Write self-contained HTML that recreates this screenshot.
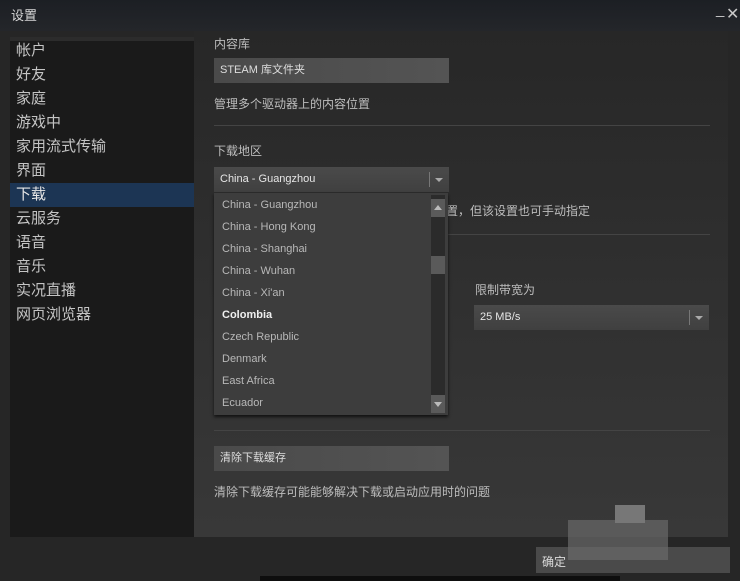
<!DOCTYPE html>
<html><head><meta charset="utf-8"><style>
*{margin:0;padding:0;box-sizing:border-box}
body{width:740px;height:581px;background:#262626;font-family:"Liberation Sans","Noto Sans CJK SC",sans-serif;position:relative;overflow:hidden;color:#c6c6c6}
.title{position:absolute;left:0;top:0;width:740px;height:31px;background:linear-gradient(#1c1f24,#24262a)}
.title span{position:absolute;left:11px;top:5px;font-size:13px;color:#d8d8d8}
.ctl{position:absolute;top:4px;font-size:15px;color:#c8c8c8}
.side{position:absolute;left:10px;top:37px;width:184px;height:500px;background:#1a1a1a}
.side .band{height:4px;background:#2c2c2c}
.side div.it{height:24px;line-height:24px;padding-left:6px;font-size:15px;color:#c4c4c4}
.side div.sel{background:#1c3554;color:#e6e6e6}
.main{position:absolute;left:194px;top:31px;width:534px;height:506px;background:linear-gradient(#272727,#383838)}
.t{position:absolute;font-size:12px;color:#bdbdbd;white-space:nowrap}
.btn{position:absolute;background:linear-gradient(90deg,#4a4a4a,#545454);font-size:11px;color:#dedede;padding-left:6px;line-height:25px}
.hr{position:absolute;height:1px;background:#444}
.dd{position:absolute;background:linear-gradient(#4a4a4a,#404040);font-size:11px;color:#e6e6e6;padding-left:6px;line-height:25px}
.dd .sep{position:absolute;right:19px;top:5px;width:1px;height:15px;background:#777}
.dd .ar{position:absolute;right:6px;top:11px;border-left:4px solid transparent;border-right:4px solid transparent;border-top:4px solid #aaa}
.list{position:absolute;left:214px;top:193px;width:234px;height:222px;background:#3d3d3d;box-shadow:0 2px 3px #111}
.list .li{height:22px;line-height:22px;padding-left:8px;font-size:11px;color:#b8b8b8}
.sb{position:absolute;left:217px;top:2px;width:14px;height:218px;background:#2b2b2b}
.sb .b{position:absolute;left:0;width:14px;height:18px;background:#5a5a5a}
</style></head><body>
<div class="title"><span>设置</span><div class="ctl" style="left:716px;top:1px">_</div><div class="ctl" style="left:726px;top:4px;font-size:16px">✕</div></div>
<div class="side"><div class="band"></div>
<div class="it" style="margin-top:-2px">帐户</div><div class="it">好友</div><div class="it">家庭</div><div class="it">游戏中</div><div class="it">家用流式传输</div><div class="it">界面</div><div class="it sel">下载</div><div class="it">云服务</div><div class="it">语音</div><div class="it">音乐</div><div class="it">实况直播</div><div class="it">网页浏览器</div>
</div>
<div class="main"></div>
<div class="t" style="left:214px;top:35px">内容库</div>
<div class="btn" style="left:214px;top:58px;width:235px">STEAM 库文件夹</div>
<div class="t" style="left:214px;top:95px">管理多个驱动器上的内容位置</div>
<div class="hr" style="left:214px;top:125px;width:496px"></div>
<div class="t" style="left:214px;top:142px">下载地区</div>
<div class="dd" style="left:214px;top:167px;width:235px;height:25px">China - Guangzhou<div class="sep"></div><div class="ar"></div></div>
<div class="t" style="left:446px;top:202px">置，但该设置也可手动指定</div>
<div class="hr" style="left:448px;top:234px;width:262px"></div>
<div class="t" style="left:475px;top:281px">限制带宽为</div>
<div class="dd" style="left:474px;top:305px;width:235px;height:25px">25 MB/s<div class="sep"></div><div class="ar"></div></div>
<div class="hr" style="left:214px;top:430px;width:496px"></div>
<div class="btn" style="left:214px;top:446px;width:235px">清除下载缓存</div>
<div class="t" style="left:214px;top:483px">清除下载缓存可能能够解决下载或启动应用时的问题</div>
<div class="list"><div style="height:1px"></div>
<div class="li">China - Guangzhou</div><div class="li">China - Hong Kong</div><div class="li">China - Shanghai</div><div class="li">China - Wuhan</div><div class="li">China - Xi'an</div><div class="li" style="color:#f0f0f0;font-weight:bold">Colombia</div><div class="li">Czech Republic</div><div class="li">Denmark</div><div class="li">East Africa</div><div class="li">Ecuador</div>
<div class="sb"><div class="b" style="top:4px"></div><div style="position:absolute;left:3px;top:10px;border-left:4px solid transparent;border-right:4px solid transparent;border-bottom:5px solid #bbb"></div>
<div class="b" style="top:61px"></div>
<div class="b" style="top:200px"></div><div style="position:absolute;left:3px;top:207px;border-left:4px solid transparent;border-right:4px solid transparent;border-top:5px solid #bbb"></div></div>
</div>
<div style="position:absolute;left:536px;top:547px;width:194px;height:26px;background:#4a4a4a"></div>
<div class="t" style="left:542px;top:553px;color:#dcdcdc">确定</div>
<div style="position:absolute;left:568px;top:520px;width:100px;height:40px;background:#6a6a6a;opacity:.7"></div>
<div style="position:absolute;left:615px;top:505px;width:30px;height:18px;background:#777"></div>
<div style="position:absolute;left:260px;top:576px;width:360px;height:5px;background:#0e0e0e"></div>
</body></html>
